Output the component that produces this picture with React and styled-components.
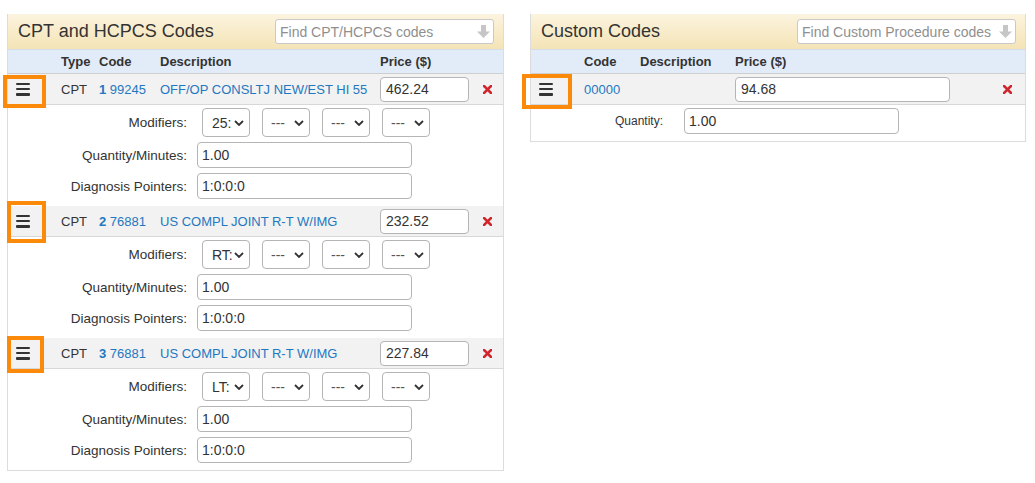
import React from "react";
import styled, { createGlobalStyle } from "styled-components";

const LINK = "#1f78c1";
const TEXT = "#333";
const ORANGE = "#fb8a0a";

const CHEVRON = encodeURIComponent(
  `<svg xmlns="http://www.w3.org/2000/svg" width="10" height="6" viewBox="0 0 10 6"><path d="M1 1l4 4 4-4" fill="none" stroke="#333" stroke-width="1.8"/></svg>`
);

const GlobalStyle = createGlobalStyle`
  html, body {
    margin: 0;
    padding: 0;
    background: #fff;
    font-family: "Liberation Sans", Arial, Helvetica, sans-serif;
    color: ${TEXT};
  }
  * { box-sizing: border-box; }
`;

const Page = styled.div`
  display: flex;
  align-items: flex-start;
  gap: 26px;
  padding: 14px 0 0 7px;
`;

const Panel = styled.section`
  width: ${(p) => p.$width}px;
  border: 1px solid #dcdcdc;
  border-top: none;
  background: #fff;
`;

const PanelHeader = styled.div`
  height: 35px;
  display: flex;
  align-items: center;
  justify-content: space-between;
  padding: 0 9px 0 10px;
  background: linear-gradient(to bottom, #fcf4df, #f4e3b6);
`;

const PanelTitle = styled.h2`
  margin: 0;
  font-size: 18px;
  font-weight: normal;
  color: ${TEXT};
`;

const SearchBox = styled.div`
  position: relative;
  width: 219px;
  height: 25px;
`;

const SearchInput = styled.input`
  width: 100%;
  height: 100%;
  border: 1px solid #c9c9c9;
  border-radius: 3px;
  background: #fff;
  padding: 0 20px 0 4px;
  font-family: inherit;
  font-size: 14px;
  color: ${TEXT};
  outline: none;

  &::placeholder {
    color: #8f8f8f;
  }
`;

const SearchArrow = styled.svg`
  position: absolute;
  right: 4px;
  top: 6px;
  width: 13px;
  height: 13px;
`;

const Row = styled.div`
  display: grid;
  grid-template-columns: ${(p) => p.$cols};
  align-items: center;
`;

const ColumnHead = styled(Row)`
  height: 25px;
  background: #e2ecf8;
  border-top: 1px solid #d6dde6;
  border-bottom: 1px solid #cfcfcf;
  font-size: 13px;
  font-weight: bold;
`;

const ItemRow = styled(Row)`
  height: 31px;
  background: #f2f2f2;
  border-bottom: 1px solid #d8d8d8;
  font-size: 13px;
  & + & { border-top: 1px solid #d8d8d8; }
`;

const Cell = styled.div`
  padding-left: 7px;
  white-space: nowrap;
  overflow: visible;
`;

const Link = styled.a`
  color: ${LINK};
  text-decoration: none;
  cursor: pointer;
  b { font-weight: bold; }
`;

const HandleCell = styled.div`
  position: relative;
  height: 100%;
  display: flex;
  align-items: center;
  padding-left: 8px;
`;

const Hamburger = styled.button`
  border: none;
  background: none;
  padding: 0;
  width: 14px;
  height: 13px;
  display: flex;
  flex-direction: column;
  justify-content: space-between;
  cursor: grab;

  span {
    display: block;
    height: 2.5px;
    background: #333;
    border-radius: 1px;
  }
`;

const Highlight = styled.span`
  position: absolute;
  left: ${(p) => p.$left}px;
  top: ${(p) => p.$top}px;
  width: ${(p) => p.$w}px;
  height: ${(p) => p.$h}px;
  border: 4px solid ${ORANGE};
  pointer-events: none;
`;

const PriceInput = styled.input`
  width: ${(p) => p.$w}px;
  height: 25px;
  border: 1px solid #b5b5b5;
  border-radius: 4px;
  padding: 0 5px;
  font-family: inherit;
  font-size: 14px;
  color: ${TEXT};
  background: #fff;
`;

const DeleteCell = styled.div`
  display: flex;
  justify-content: center;
  align-items: center;
`;

const DeleteButton = styled.button`
  border: none;
  background: none;
  padding: 0;
  width: 9px;
  height: 9px;
  cursor: pointer;
  svg { display: block; width: 9px; height: 9px; }
`;

const Details = styled.div`
  display: grid;
  grid-template-columns: ${(p) => p.$labelWidth}px 1fr;
  column-gap: ${(p) => p.$gap}px;
  row-gap: 5px;
  align-items: center;
  padding: 3px 0 7px;
`;

const Label = styled.label`
  text-align: right;
  font-size: ${(p) => (p.$small ? "12px" : "13.5px")};
  color: ${TEXT};
  white-space: nowrap;
`;

const FieldInput = styled.input`
  width: 215px;
  height: 26px;
  border: 1px solid #b5b5b5;
  border-radius: 4px;
  padding: 0 4px;
  font-family: inherit;
  font-size: 14px;
  color: ${TEXT};
  background: #fff;
`;

const ModifierGroup = styled.div`
  display: flex;
  gap: 12px;
  padding-left: 5px;
`;

const ModifierSelect = styled.select`
  appearance: none;
  -webkit-appearance: none;
  width: 48px;
  height: 29px;
  border: 1px solid #b5b5b5;
  border-radius: 4px;
  padding: 0 0 0 ${(p) => (p.$empty ? 8 : 9)}px;
  font-family: inherit;
  font-size: 14px;
  color: ${(p) => (p.$empty ? "#555" : TEXT)};
  background: #fff url("data:image/svg+xml;charset=utf8,${CHEVRON}") no-repeat right 5px center;
  background-size: 10px 6px;
`;

const ArrowDownIcon = () => (
  <SearchArrow viewBox="0 0 13 13">
    <path d="M4 0h5v6.5h4L6.5 13 0 6.5h4z" fill="#c6c6c6" />
  </SearchArrow>
);

const CrossIcon = () => (
  <svg viewBox="0 0 9 9">
    <path d="M1 1l7 7M8 1l-7 7" stroke="#d0262d" strokeWidth="2.6" strokeLinecap="square" />
  </svg>
);

const Handle = ({ hl }) => (
  <HandleCell>
    <Hamburger aria-label="Reorder">
      <span />
      <span />
      <span />
    </Hamburger>
    <Highlight $left={hl[0]} $top={hl[1]} $w={hl[2]} $h={hl[3]} />
  </HandleCell>
);

const CPT_COLS = "46px 38px 61px 220px 1fr 36px";
const CUSTOM_COLS = "46px 56px 95px 1fr 36px";

const cptItems = [
  { n: 1, code: "99245", desc: "OFF/OP CONSLTJ NEW/EST HI 55", price: "462.24", mod: "25:", hl: [-5, 1, 43, 33] },
  { n: 2, code: "76881", desc: "US COMPL JOINT R-T W/IMG", price: "232.52", mod: "RT:", hl: [-1, -5, 39, 42] },
  { n: 3, code: "76881", desc: "US COMPL JOINT R-T W/IMG", price: "227.84", mod: "LT:", hl: [-1, -2, 37, 37] },
];

const Modifiers = ({ first }) => (
  <ModifierGroup>
    <ModifierSelect defaultValue={first}>
      <option>{first}</option>
    </ModifierSelect>
    {[0, 1, 2].map((i) => (
      <ModifierSelect key={i} $empty defaultValue="---">
        <option>---</option>
      </ModifierSelect>
    ))}
  </ModifierGroup>
);

const CptItem = ({ item }) => (
  <>
    <ItemRow $cols={CPT_COLS}>
      <Handle hl={item.hl} />
      <Cell>CPT</Cell>
      <Cell>
        <Link><b>{item.n}</b> {item.code}</Link>
      </Cell>
      <Cell>
        <Link>{item.desc}</Link>
      </Cell>
      <Cell>
        <PriceInput $w={89} defaultValue={item.price} />
      </Cell>
      <DeleteCell>
        <DeleteButton aria-label="Remove"><CrossIcon /></DeleteButton>
      </DeleteCell>
    </ItemRow>
    <Details $labelWidth={179} $gap={10}>
      <Label>Modifiers:</Label>
      <Modifiers first={item.mod} />
      <Label>Quantity/Minutes:</Label>
      <FieldInput defaultValue="1.00" />
      <Label>Diagnosis Pointers:</Label>
      <FieldInput defaultValue="1:0:0:0" />
    </Details>
  </>
);

export default function App() {
  return (
    <>
      <GlobalStyle />
      <Page>
        <Panel $width={497}>
          <PanelHeader>
            <PanelTitle>CPT and HCPCS Codes</PanelTitle>
            <SearchBox>
              <SearchInput placeholder="Find CPT/HCPCS codes" />
              <ArrowDownIcon />
            </SearchBox>
          </PanelHeader>
          <ColumnHead $cols={CPT_COLS}>
            <span />
            <Cell>Type</Cell>
            <Cell>Code</Cell>
            <Cell>Description</Cell>
            <Cell>Price ($)</Cell>
            <span />
          </ColumnHead>
          {cptItems.map((item) => (
            <CptItem key={item.n} item={item} />
          ))}
        </Panel>

        <Panel $width={496}>
          <PanelHeader>
            <PanelTitle>Custom Codes</PanelTitle>
            <SearchBox>
              <SearchInput placeholder="Find Custom Procedure codes" />
              <ArrowDownIcon />
            </SearchBox>
          </PanelHeader>
          <ColumnHead $cols={CUSTOM_COLS}>
            <span />
            <Cell>Code</Cell>
            <Cell>Description</Cell>
            <Cell>Price ($)</Cell>
            <span />
          </ColumnHead>
          <ItemRow $cols={CUSTOM_COLS}>
            <Handle hl={[-9, 0, 50, 35]} />
            <Cell>
              <Link>00000</Link>
            </Cell>
            <Cell />
            <Cell>
              <PriceInput $w={215} defaultValue="94.68" />
            </Cell>
            <DeleteCell>
              <DeleteButton aria-label="Remove"><CrossIcon /></DeleteButton>
            </DeleteCell>
          </ItemRow>
          <Details $labelWidth={132} $gap={21}>
            <Label $small>Quantity:</Label>
            <FieldInput defaultValue="1.00" />
          </Details>
        </Panel>
      </Page>
    </>
  );
}
